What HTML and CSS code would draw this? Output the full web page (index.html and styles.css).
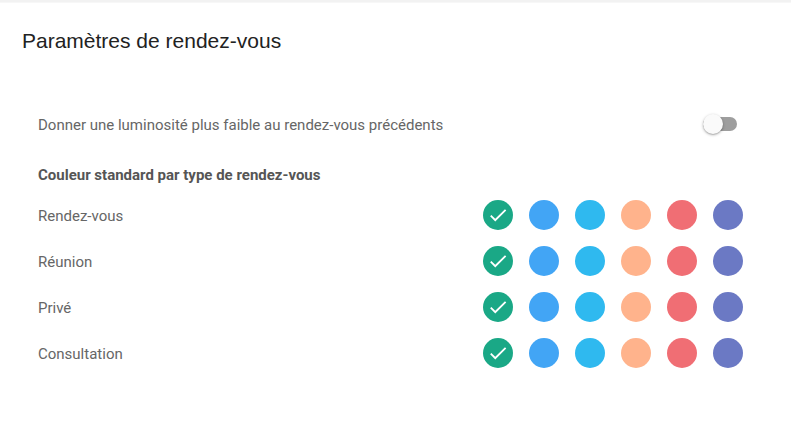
FILE: index.html
```html
<!DOCTYPE html>
<html lang="fr">
<head>
<meta charset="utf-8">
<title>Paramètres de rendez-vous</title>
<link rel="stylesheet" href="styles.css">
</head>
<body>
<div class="topbar"></div>
<main class="card">
  <h1 class="title">Paramètres de rendez-vous</h1>
  <section class="settings">
    <div class="toggle-row">
      <span class="label">Donner une luminosité plus faible au rendez-vous précédents</span>
      <span class="toggle"><span class="track"></span><span class="knob"></span></span>
    </div>
    <h2 class="subhead">Couleur standard par type de rendez-vous</h2>
    <div class="color-row">
      <span class="label">Rendez-vous</span>
      <div class="swatches">
        <span class="dot green selected"><svg viewBox="0 0 24 24"><path d="M9 16.2L4.8 12l-1.4 1.4L9 19 21 7l-1.4-1.4L9 16.2z"/></svg></span>
        <span class="dot blue"></span><span class="dot lightblue"></span><span class="dot peach"></span><span class="dot red"></span><span class="dot indigo"></span>
      </div>
    </div>
    <div class="color-row">
      <span class="label">Réunion</span>
      <div class="swatches">
        <span class="dot green selected"><svg viewBox="0 0 24 24"><path d="M9 16.2L4.8 12l-1.4 1.4L9 19 21 7l-1.4-1.4L9 16.2z"/></svg></span>
        <span class="dot blue"></span><span class="dot lightblue"></span><span class="dot peach"></span><span class="dot red"></span><span class="dot indigo"></span>
      </div>
    </div>
    <div class="color-row">
      <span class="label">Privé</span>
      <div class="swatches">
        <span class="dot green selected"><svg viewBox="0 0 24 24"><path d="M9 16.2L4.8 12l-1.4 1.4L9 19 21 7l-1.4-1.4L9 16.2z"/></svg></span>
        <span class="dot blue"></span><span class="dot lightblue"></span><span class="dot peach"></span><span class="dot red"></span><span class="dot indigo"></span>
      </div>
    </div>
    <div class="color-row">
      <span class="label">Consultation</span>
      <div class="swatches">
        <span class="dot green selected"><svg viewBox="0 0 24 24"><path d="M9 16.2L4.8 12l-1.4 1.4L9 19 21 7l-1.4-1.4L9 16.2z"/></svg></span>
        <span class="dot blue"></span><span class="dot lightblue"></span><span class="dot peach"></span><span class="dot red"></span><span class="dot indigo"></span>
      </div>
    </div>
  </section>
</main>
</body>
</html>
```

FILE: styles.css
```css
html, body {
  margin: 0;
  padding: 0;
  background: #ffffff;
}
body {
  font-family: Roboto, "Liberation Sans", sans-serif;
}
.topbar {
  height: 2px;
  background: #f2f2f2;
  border-bottom: 1px solid #f7f7f7;
}
.card {
  padding: 25px 48px 0 22px;
}
.title {
  margin: 0;
  font-family: "Liberation Sans", Arial, sans-serif;
  font-weight: normal;
  font-size: 21px;
  line-height: 25px;
  color: #222222;
}
.settings {
  margin-top: 51px;
  padding-left: 16px;
}
.label {
  font-size: 15px;
  color: #666666;
  padding-top: 2px;
}
.toggle-row {
  height: 40px;
  display: flex;
  align-items: center;
  justify-content: space-between;
}
.toggle {
  position: relative;
  width: 34px;
  height: 20px;
  margin-right: 6px;
  display: flex;
  align-items: center;
}
.track {
  width: 34px;
  height: 14px;
  border-radius: 7px;
  background: #9e9e9e;
}
.knob {
  position: absolute;
  left: 0;
  top: 0;
  width: 20px;
  height: 20px;
  border-radius: 50%;
  background: #fafafa;
  box-shadow: 0 1px 3px rgba(0,0,0,0.3), 0 1px 1px rgba(0,0,0,0.12);
}
.subhead {
  margin: 21px 0 7px;
  font-size: 15px;
  line-height: 20px;
  font-weight: bold;
  color: #555555;
}
.color-row {
  height: 46px;
  display: flex;
  align-items: center;
  justify-content: space-between;
}
.swatches {
  display: flex;
  gap: 16px;
}
.dot {
  width: 30px;
  height: 30px;
  border-radius: 50%;
  display: flex;
  align-items: center;
  justify-content: center;
}
.dot svg {
  width: 22px;
  height: 22px;
  fill: #ffffff;
}
.green { background: #1aa886; }
.blue { background: #42a5f5; }
.lightblue { background: #2fb9ef; }
.peach { background: #ffb38c; }
.red { background: #f06e74; }
.indigo { background: #6b79c4; }
```
